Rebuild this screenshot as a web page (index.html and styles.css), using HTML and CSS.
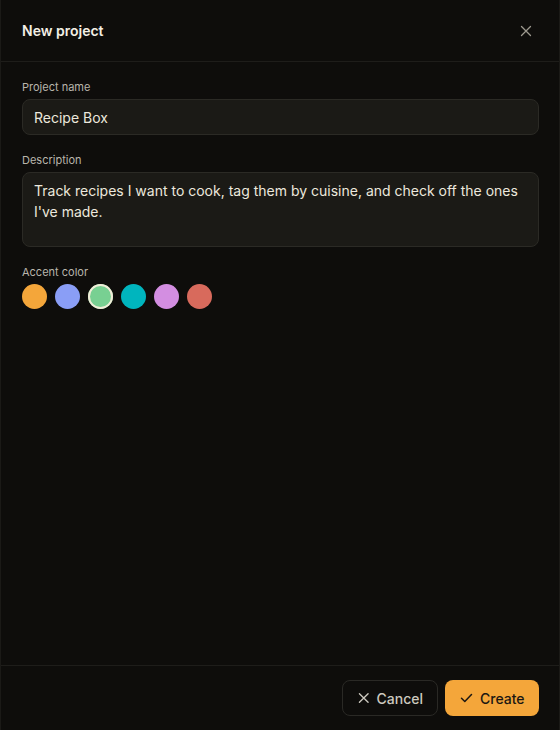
FILE: index.html
```html
<!DOCTYPE html>
<html lang="en">
<head>
<meta charset="utf-8">
<title>New project</title>
<link rel="stylesheet" href="styles.css">
</head>
<body>
<div class="dialog">
  <header class="dialog-header">
    <h1 class="dialog-title">New project</h1>
    <button class="icon-btn" aria-label="Close">
      <svg width="12" height="12" viewBox="0 0 12 12"><path d="M1.5 1.5 10.5 10.5M10.5 1.5 1.5 10.5" stroke="currentColor" stroke-width="1.3" stroke-linecap="round" fill="none"/></svg>
    </button>
  </header>
  <main class="dialog-body">
    <div class="field">
      <label class="field-label">Project name</label>
      <div class="input">Recipe Box</div>
    </div>
    <div class="field">
      <label class="field-label">Description</label>
      <div class="input textarea">Track recipes I want to cook, tag them by cuisine, and check off the ones I've made.</div>
    </div>
    <div class="field">
      <label class="field-label">Accent color</label>
      <div class="swatches">
        <span class="swatch sw-orange"></span>
        <span class="swatch sw-blue"></span>
        <span class="swatch sw-green selected"></span>
        <span class="swatch sw-teal"></span>
        <span class="swatch sw-purple"></span>
        <span class="swatch sw-red"></span>
      </div>
    </div>
  </main>
  <footer class="dialog-footer">
    <button class="btn btn-secondary">
      <svg width="12" height="12" viewBox="0 0 12 12"><path d="M1.5 1.5 10.5 10.5M10.5 1.5 1.5 10.5" stroke="currentColor" stroke-width="1.4" stroke-linecap="round" fill="none"/></svg>
      Cancel
    </button>
    <button class="btn btn-primary">
      <svg width="13" height="12" viewBox="0 0 13 12"><path d="M1.5 6.2 4.8 9.5 11.5 2.5" stroke="currentColor" stroke-width="1.5" stroke-linecap="round" stroke-linejoin="round" fill="none"/></svg>
      Create
    </button>
  </footer>
</div>
</body>
</html>
```
FILE: styles.css
```css
* { box-sizing: border-box; }
html, body { margin: 0; padding: 0; background: #0e0d0b; }
body {
  font-family: Inter, "Noto Sans", sans-serif;
  color: #ece8dd;
}
.dialog {
  width: 560px;
  height: 730px;
  display: flex;
  flex-direction: column;
  background: #0e0d0b;
  border-left: 1px solid #1b1a17;
  border-right: 1px solid #1b1a17;
}
.dialog-header {
  height: 62px;
  flex: none;
  display: flex;
  align-items: center;
  justify-content: space-between;
  padding: 0 27px 0 21px;
  border-bottom: 1px solid #1e1d1a;
}
.dialog-title {
  margin: 0;
  font-size: 14px;
  font-weight: 600;
  color: #f3efe5;
}
.icon-btn {
  background: none;
  border: 0;
  padding: 0;
  color: #9d998f;
  display: flex;
}
.dialog-body {
  flex: 1;
  padding: 18px 20px 0 21px;
  display: flex;
  flex-direction: column;
  gap: 18px;
}
.field { display: flex; flex-direction: column; gap: 5px; }
.field-label {
  font-size: 11px;
  line-height: 14px;
  color: #b9b5ab;
}
.input {
  height: 36px;
  padding: 0 11px;
  display: flex;
  align-items: center;
  background: #1b1a16;
  border: 1px solid #2b2a25;
  border-radius: 8px;
  font-size: 14px;
  color: #ece8dd;
}
.textarea {
  height: 75px;
  align-items: flex-start;
  padding-top: 7px;
  line-height: 21px;
}
.swatches { display: flex; gap: 8px; }
.swatch {
  width: 25px;
  height: 25px;
  border-radius: 50%;
  display: block;
}
.sw-orange { background: #f4a63a; }
.sw-blue { background: #8a9ef6; }
.sw-green { background: #78d092; }
.sw-teal { background: #00b5be; }
.sw-purple { background: #d38ee1; }
.sw-red { background: #d86a5c; }
.swatch.selected { box-shadow: inset 0 0 0 2px #f1ecd8; }
.dialog-footer {
  flex: none;
  height: 65px;
  border-top: 1px solid #1e1d1a;
  display: flex;
  justify-content: flex-end;
  align-items: center;
  gap: 7px;
  padding: 0 20px 0 0;
}
.btn {
  height: 36px;
  border-radius: 8px;
  display: flex;
  align-items: center;
  gap: 7px;
  font-family: Inter, "Noto Sans", sans-serif;
  font-size: 14px;
  font-weight: 500;
  padding: 0 14px 0 15px;
}
.btn-secondary {
  background: #0e0d0b;
  border: 1px solid #2a2925;
  color: #cdc9bf;
  width: 96px;
}
.btn-primary {
  background: #f4a63a;
  border: 0;
  color: #1b1712;
  width: 94px;
}
```
